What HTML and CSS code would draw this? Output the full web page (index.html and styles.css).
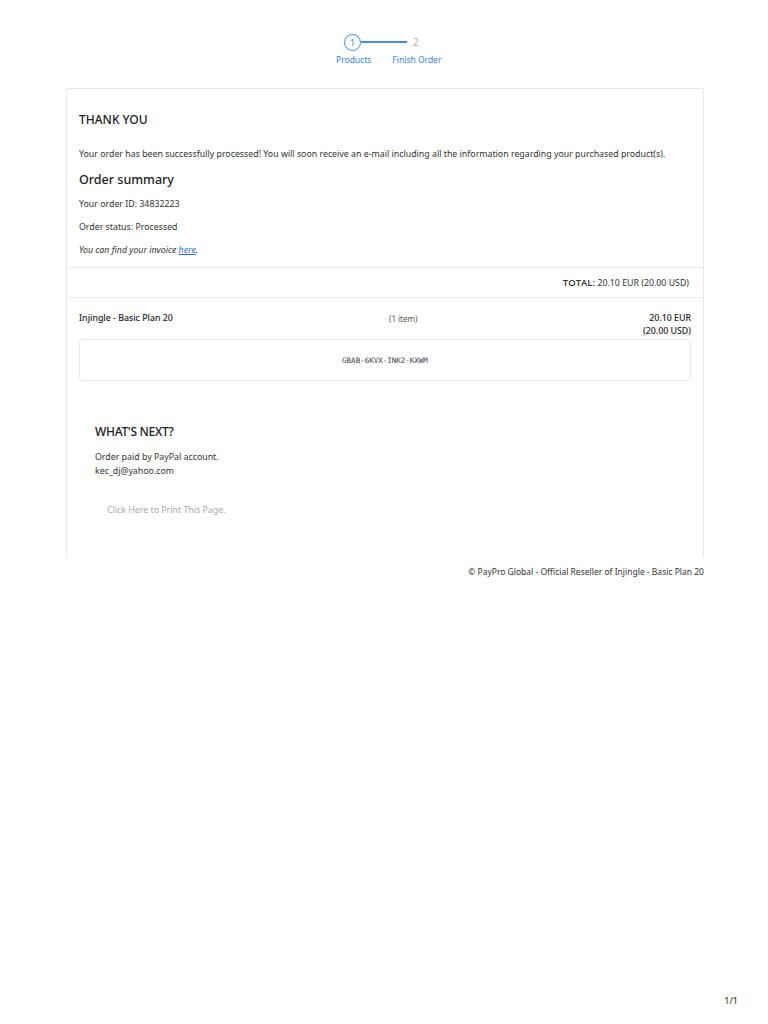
FILE: index.html
```html
<!DOCTYPE html>
<html lang="en">
<head>
    <meta charset="UTF-8">
    <meta name="viewport" content="width=device-width, initial-scale=1.0">
    <title>Order Complete - PayPro Global</title>
    <link rel="stylesheet" href="styles.css">
</head>
<body>
    <div class="page">
        <div class="steps">
            <div class="steps-track">
                <span class="step-circle">1</span>
                <span class="step-line"></span>
                <span class="step-next">2</span>
            </div>
            <div class="steps-labels">
                <span class="step-label step-label-first">Products</span>
                <span class="step-label">Finish Order</span>
            </div>
        </div>

        <div class="order-card">
            <div class="order-info">
                <h2 class="thank-title">THANK YOU</h2>
                <p class="lead">Your order has been successfully processed! You will soon receive an e-mail including all the information regarding your purchased product(s).</p>
                <h3 class="summary-title">Order summary</h3>
                <p class="info-line">Your order ID: 34832223</p>
                <p class="info-line">Order status: Processed</p>
                <p class="info-line invoice">You can find your invoice <a href="#">here</a>.</p>
            </div>

            <div class="total-row">
                <strong>TOTAL:</strong> 20.10 EUR (20.00 USD)
            </div>

            <div class="item">
                <div class="item-row">
                    <span class="item-name">Injingle - Basic Plan 20</span>
                    <span class="item-qty">(1 item)</span>
                    <span class="item-price">20.10 EUR<br>(20.00 USD)</span>
                </div>
                <div class="license-box">
                    <code>GBAB-6KVX-INK2-KXWM</code>
                </div>
            </div>

            <div class="next">
                <h2 class="next-title">WHAT'S NEXT?</h2>
                <p class="next-line">Order paid by PayPal account.<br>kec_dj@yahoo.com</p>
                <a class="print-link" href="#" onclick="window.print(); return false;">Click Here to Print This Page.</a>
            </div>
        </div>

        <div class="copyright">© PayPro Global - Official Reseller of Injingle - Basic Plan 20</div>
    </div>

    <div class="page-count">1/1</div>
</body>
</html>
```

FILE: styles.css
```css
body {
    font-family: 'Noto Sans', 'Open Sans', sans-serif;
    margin: 0;
    padding: 0;
    background: #fff;
    color: #333;
    font-size: 8.8px;
    min-height: 1024px;
    display: flex;
    flex-direction: column;
}

.page {
    width: 638px;
    margin: 0 auto 0 66px;
    flex: 1;
}

/* steps */

.steps {
    width: 130px;
    margin: 33px auto 0 253px;
}

.steps-track {
    display: flex;
    align-items: center;
    padding-left: 25px;
    height: 18px;
}

.step-circle {
    width: 15px;
    height: 15px;
    border: 1.5px solid #3d8fe8;
    border-radius: 50%;
    color: #3d8fe8;
    font-size: 9px;
    line-height: 15px;
    text-align: center;
}

.step-line {
    width: 46px;
    height: 1.5px;
    background: #3d8fe8;
}

.step-next {
    margin-left: 6px;
    color: #b0b0b0;
    font-size: 10px;
}

.steps-labels {
    display: flex;
    gap: 21px;
    margin-top: 3px;
    padding-left: 17px;
}

.step-label {
    color: #2f86e6;
    font-size: 8.5px;
    line-height: 12px;
}

/* card */

.order-card {
    margin-top: 22px;
    border: 1px solid #e8e8e8;
    border-bottom: none;
    border-radius: 3px 3px 0 0;
}

.order-info {
    padding: 23px 12px 10px;
    border-bottom: 1px solid #ececec;
}

.order-info p {
    margin: 0;
    line-height: 14px;
}

.thank-title {
    margin: 0 0 19px;
    font-size: 12px;
    line-height: 16px;
    font-weight: 500;
    color: #222;
}

.summary-title {
    margin: 10px 0 8px;
    font-size: 12.5px;
    line-height: 18px;
    font-weight: 500;
    color: #222;
}

.info-line + .info-line {
    margin-top: 9px;
}

.invoice {
    font-style: italic;
}

.invoice a {
    color: #1a73e8;
}

.total-row {
    padding: 8px 14px 7px 12px;
    text-align: right;
    line-height: 14px;
    border-bottom: 1px solid #ececec;
}

.total-row strong {
    font-family: 'Open Sans', sans-serif;
    font-size: 9.5px;
    font-weight: 600;
    color: #333;
}

.item {
    padding: 14px 12px 0;
}

.item-row {
    display: grid;
    grid-template-columns: 310px 1fr auto;
    line-height: 13px;
}

.item-name {
    font-weight: 500;
    color: #222;
}

.item-qty {
    font-size: 8px;
    color: #555;
}

.item-price {
    text-align: right;
    font-weight: 500;
    color: #222;
}

.license-box {
    margin-top: 1px;
    height: 40px;
    border: 1px solid #e8e8e8;
    border-radius: 3px;
    display: flex;
    align-items: center;
    justify-content: center;
}

.license-box code {
    font-family: 'DejaVu Sans Mono', monospace;
    font-size: 7.5px;
    color: #444;
}

.next {
    padding: 43px 28px 40px;
}

.next-title {
    margin: 0 0 10px;
    font-size: 12px;
    line-height: 16px;
    font-weight: 500;
    color: #222;
    letter-spacing: -0.3px;
}

.next-line {
    margin: 0;
    line-height: 14px;
}

.print-link {
    display: inline-block;
    margin: 25px 0 0 12px;
    line-height: 14px;
    color: #aaa;
    text-decoration: none;
}

.copyright {
    margin-top: 9px;
    text-align: right;
    font-size: 8.5px;
    line-height: 12px;
}

.page-count {
    align-self: flex-end;
    margin: 0 30px 17px 0;
    font-size: 9px;
    color: #222;
}
```
